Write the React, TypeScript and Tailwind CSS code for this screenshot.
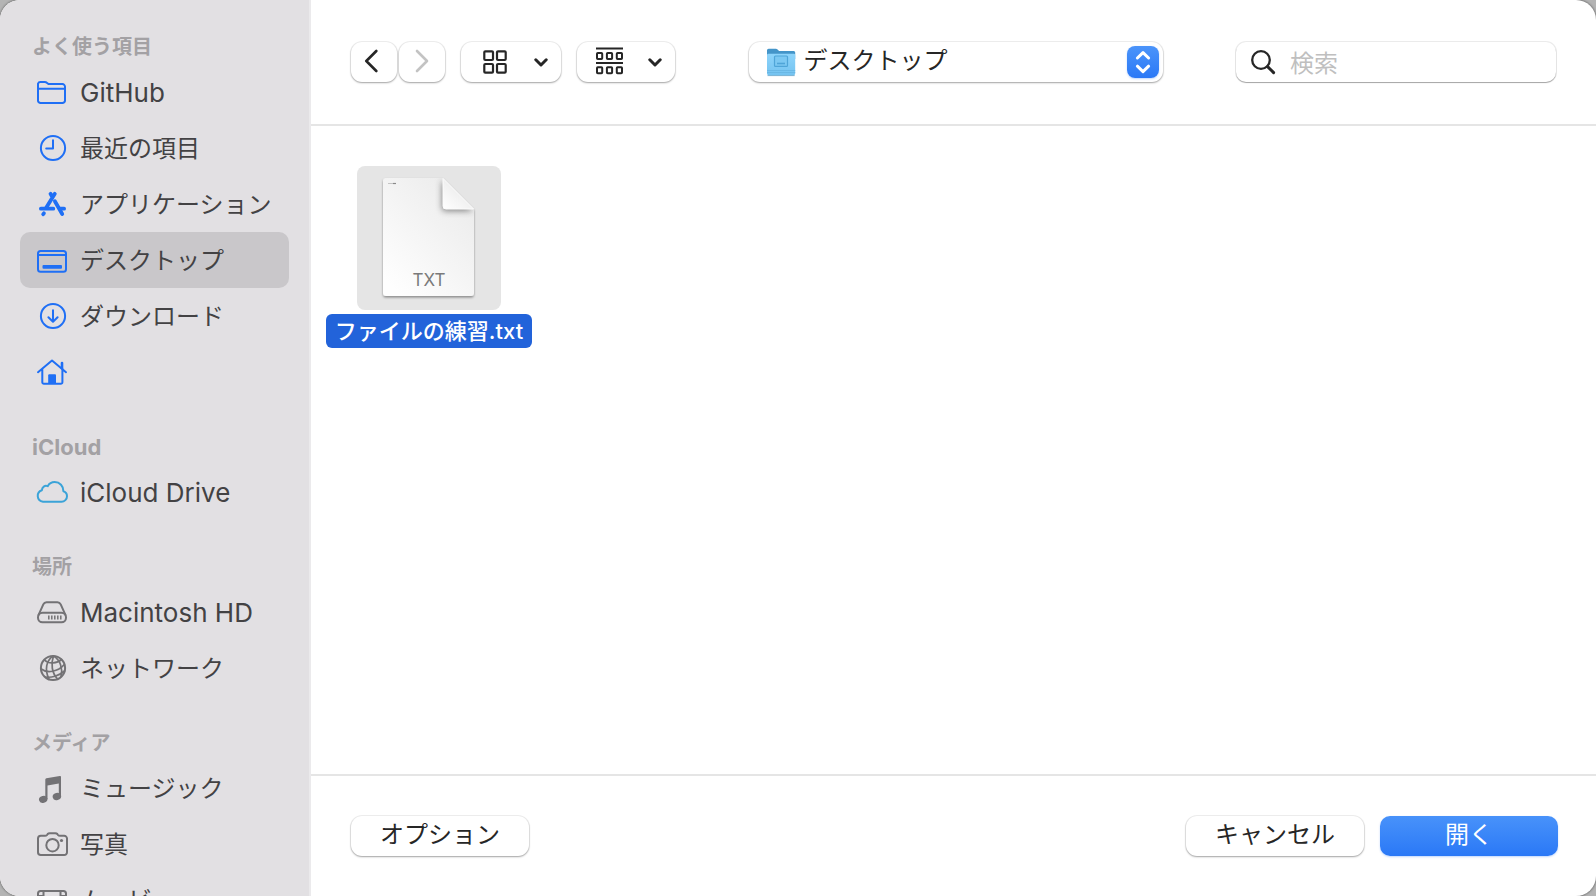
import type { ReactNode } from "react";

type Item = { label: string; icon: ReactNode; selected?: boolean; latin?: boolean };
type Section = { title: string; tone: string; items: Item[]; latin?: boolean };

function Glyph({ children }: { children: ReactNode }) {
  return (
    <svg
      viewBox="0 0 32 32"
      className="size-8 shrink-0"
      fill="none"
      stroke="currentColor"
      strokeWidth="2"
      strokeLinecap="round"
      strokeLinejoin="round"
      aria-hidden="true"
    >
      {children}
    </svg>
  );
}

const FolderGlyph = (
  <Glyph>
    <path d="M2 7.600A2.600 2.600 0 0 1 4.600 6H8.800C9.800 6 10.400 6.300 11.100 6.900L11.700 7.400C12.300 7.900 12.800 8.100 13.700 8.100H26.400A2.600 2.600 0 0 1 29 10.700V24.400A2.600 2.600 0 0 1 26.400 27H4.600A2.600 2.600 0 0 1 2 24.400ZM2 12.800H29" />
  </Glyph>
);
const ClockGlyph = (
  <Glyph>
    <circle cx="17" cy="16" r="12.100" />
    <path d="M17 8.200V16.500H10.200" />
  </Glyph>
);
const AppsGlyph = (
  <Glyph>
    <g strokeWidth="3.800">
      <path d="M14.500 5.800 15.800 8M18.800 5.800 10.200 19.800" />
      <path d="M18.900 13.200 26.200 26" />
      <path d="M4.900 20.700H17.300M24.500 20.700H28.100" />
      <path d="M7.900 25.300 7.200 26.200" />
    </g>
  </Glyph>
);
const DesktopGlyph = (
  <Glyph>
    <rect x="2" y="7" width="28" height="20.800" rx="2.600" />
    <path d="M2 11H30" />
    <rect x="6.500" y="21" width="19.500" height="3.800" rx="1" fill="currentColor" stroke="none" />
  </Glyph>
);
const DownloadGlyph = (
  <Glyph>
    <circle cx="17" cy="16" r="12.100" />
    <path d="M17 10.200V21.600M12.400 17.200 17 21.700 21.600 17.200" />
  </Glyph>
);
const HomeGlyph = (
  <Glyph>
    <path d="M2 16.200 16 4.500 30 16.200M6.300 13V26.200A1.600 1.600 0 0 0 7.900 27.800H24.800A1.600 1.600 0 0 0 26.400 26.200V13" />
    <path d="M26 12.500V7" strokeWidth="2.600" />
    <path d="M12.200 28V19.200A1 1 0 0 1 13.200 18.200H19A1 1 0 0 1 20 19.200V28Z" fill="currentColor" stroke="none" />
  </Glyph>
);
const CloudGlyph = (
  <Glyph>
    <path d="M7 25.700A5.900 5.900 0 0 1 5.900 14.200C5.900 11 8.900 9 11.700 10.200 13.200 7.500 15.800 6.100 18.700 6.100 23.800 6.100 27.500 10 27.400 15.200 29.600 15.900 31 17.900 31 20.200A5.500 5.500 0 0 1 25.500 25.700Z" />
  </Glyph>
);
const DriveGlyph = (
  <Glyph>
    <path d="M2.600 18.800 7.300 8.300C8 6.800 9 6.200 10.500 6.200H21.500C23 6.200 24 6.800 24.700 8.300L29.400 18.800" />
    <rect x="2" y="16.700" width="28" height="9.600" rx="4.500" />
    <path d="M12.800 19.600V23.400M15.800 19.600V23.400M18.800 19.600V23.400M21.800 19.600V23.400M24.800 19.600V23.400" strokeWidth="1.500" strokeLinecap="butt" />
  </Glyph>
);
const NetworkGlyph = (
  <Glyph>
    <circle cx="17" cy="16" r="12.100" />
    <g strokeWidth="1.700">
      <path d="M17.500 4C10 8 8.500 18 13 27.300M17.500 4C14.500 12 16 21 21.500 27M17.500 4C24.500 8 27 17 25 24.500" />
      <path d="M8.500 8C13 12.500 21 11.500 25.500 7.500M5.200 17C11 21.500 22 20 28.300 12.500M9.500 25C15 26 23 24 28.500 19" />
    </g>
  </Glyph>
);
const MusicGlyph = (
  <Glyph>
    <g fill="currentColor" stroke="none">
      <path d="M9.300 7.600C9.300 6.900 9.700 6.500 10.400 6.300L23.800 3.900C24.600 3.800 25 4.100 25 4.800V24.300H22.800V11.400L11.500 13.500V27H9.300Z" />
      <ellipse cx="7.200" cy="27.300" rx="4.300" ry="3.500" transform="rotate(-14 7.200 27.300)" />
      <ellipse cx="20.900" cy="24.500" rx="4.300" ry="3.500" transform="rotate(-14 20.900 24.500)" />
    </g>
  </Glyph>
);
const CameraGlyph = (
  <Glyph>
    <path d="M4.800 7.800H9C10 7.800 10.500 7.500 11.100 6.800L11.700 6C12.300 5.300 12.800 5.200 13.600 5.200H19.400C20.200 5.200 20.700 5.300 21.300 6L21.900 6.800C22.500 7.500 23 7.800 24 7.800H28.200A2.800 2.800 0 0 1 31 10.600V24.200A2.800 2.800 0 0 1 28.200 27H4.800A2.800 2.800 0 0 1 2 24.200V10.600A2.800 2.800 0 0 1 4.800 7.800Z" />
    <circle cx="16.500" cy="17.200" r="6.200" />
    <circle cx="25.500" cy="12.500" r="1.600" fill="currentColor" stroke="none" />
  </Glyph>
);
const FilmGlyph = (
  <Glyph>
    <rect x="2" y="7" width="28" height="21" rx="2.600" />
    <path d="M7.500 7V28M24.500 7V28M2 12H7.500M2 17.500H7.500M2 23H7.500M24.500 12H30M24.500 17.500H30M24.500 23H30M7.500 17.500H24.500" />
  </Glyph>
);

const sections: Section[] = [
  {
    title: "よく使う項目",
    tone: "text-[#1f6ff5]",
    items: [
      { label: "GitHub", icon: FolderGlyph, latin: true },
      { label: "最近の項目", icon: ClockGlyph },
      { label: "アプリケーション", icon: AppsGlyph },
      { label: "デスクトップ", icon: DesktopGlyph, selected: true },
      { label: "ダウンロード", icon: DownloadGlyph },
      { label: "", icon: HomeGlyph },
    ],
  },
  {
    title: "iCloud",
    latin: true,
    tone: "text-[#3ba3d8]",
    items: [{ label: "iCloud Drive", icon: CloudGlyph, latin: true }],
  },
  {
    title: "場所",
    tone: "text-[#737275]",
    items: [
      { label: "Macintosh HD", icon: DriveGlyph, latin: true },
      { label: "ネットワーク", icon: NetworkGlyph },
    ],
  },
  {
    title: "メディア",
    tone: "text-[#737275]",
    items: [
      { label: "ミュージック", icon: MusicGlyph },
      { label: "写真", icon: CameraGlyph },
      { label: "ムービー", icon: FilmGlyph },
    ],
  },
];

function Sidebar() {
  return (
    <nav className="flex w-[311px] shrink-0 flex-col gap-7 overflow-hidden border-r-2 border-[#ebeaec] bg-[#e2e0e3] px-5 pt-7">
      {sections.map((section) => (
        <section key={section.title} className="shrink-0">
          <h2
            className={`flex h-9 items-center px-3 pt-0.5 font-bold text-[#a3a1a4] ${section.latin ? "text-[22px]" : "text-xl"}`}
          >
            {section.title}
          </h2>
          <ul>
            {section.items.map((item, i) => (
              <li key={i}>
                <a
                  href="#"
                  aria-current={item.selected ? "page" : undefined}
                  className={`flex h-14 items-center gap-3 rounded-[10px] px-4 ${item.selected ? "bg-[#c9c7ca]" : ""}`}
                >
                  <span className={section.tone}>{item.icon}</span>
                  <span
                    className={`pt-0.5 leading-8 whitespace-nowrap text-[#434244] ${item.latin ? "text-[26px]" : "text-2xl"}`}
                  >
                    {item.label}
                  </span>
                </a>
              </li>
            ))}
          </ul>
        </section>
      ))}
    </nav>
  );
}

const raised =
  "rounded-[11px] bg-white shadow-[0_0_0_1px_rgba(0,0,0,0.06),0_1px_2px_rgba(0,0,0,0.32)]";

function DownChevron() {
  return (
    <svg viewBox="0 0 14 9" className="h-[9px] w-[14px]" fill="none" stroke="currentColor" strokeWidth="3" strokeLinecap="round" strokeLinejoin="round" aria-hidden="true">
      <path d="M1.800 1.800 7 7 12.200 1.800" />
    </svg>
  );
}

function Toolbar() {
  return (
    <header className="flex h-[126px] shrink-0 items-center justify-between border-b-2 border-[#e5e5e5] px-10 text-[#262626]">
      <div className="flex gap-4">
        <div className="flex gap-0.5">
          <button type="button" aria-label="戻る" className={`flex h-10 w-[46px] items-center justify-center pr-1.5 pb-0.5 ${raised}`}>
            <svg viewBox="0 0 14 24" className="h-6 w-3.5" fill="none" stroke="currentColor" strokeWidth="2.600" strokeLinecap="round" strokeLinejoin="round" aria-hidden="true">
              <path d="M12.300 2 2.300 12 12.300 22" />
            </svg>
          </button>
          <button type="button" aria-label="進む" disabled className={`flex h-10 w-[46px] items-center justify-center pb-0.5 text-[#c3c3c3] ${raised}`}>
            <svg viewBox="0 0 14 24" className="h-6 w-3.5" fill="none" stroke="currentColor" strokeWidth="2.600" strokeLinecap="round" strokeLinejoin="round" aria-hidden="true">
              <path d="M2 2 12 12 2 22" />
            </svg>
          </button>
        </div>
        <button type="button" aria-label="表示方法" className={`flex h-10 w-[100px] items-center justify-between pr-[13px] pl-[22px] ${raised}`}>
          <svg viewBox="0 0 24 25" className="h-[25px] w-6" fill="none" stroke="currentColor" strokeWidth="2.200" aria-hidden="true">
            <rect x="1.300" y="1.300" width="8.700" height="8.700" rx="1" />
            <rect x="14" y="1.300" width="8.700" height="8.700" rx="1" />
            <rect x="1.300" y="14" width="8.700" height="8.700" rx="1" />
            <rect x="14" y="14" width="8.700" height="8.700" rx="1" />
          </svg>
          <DownChevron />
        </button>
        <button type="button" aria-label="グループ分け" className={`flex h-10 w-[98px] items-center justify-between pr-[13px] pl-[19px] ${raised}`}>
          <svg viewBox="0 0 27 30" className="h-[30px] w-[27px]" fill="none" stroke="currentColor" strokeWidth="2" aria-hidden="true">
            <path d="M0 1.500H27M0 16H27" />
            <rect x="1" y="6" width="5.200" height="6" rx="0.800" />
            <rect x="10.900" y="6" width="5.200" height="6" rx="0.800" />
            <rect x="20.800" y="6" width="5.200" height="6" rx="0.800" />
            <rect x="1" y="20.300" width="5.200" height="6" rx="0.800" />
            <rect x="10.900" y="20.300" width="5.200" height="6" rx="0.800" />
            <rect x="20.800" y="20.300" width="5.200" height="6" rx="0.800" />
          </svg>
          <DownChevron />
        </button>
      </div>

      <div className={`flex h-10 w-[414px] items-center pr-1 pl-[17px] ${raised}`}>
        <svg viewBox="0 0 30 30" className="size-[30px] shrink-0" aria-hidden="true">
          <defs>
            <linearGradient id="folder-front" x1="0" y1="0" x2="0" y2="1">
              <stop offset="0" stopColor="#8ed4fb" />
              <stop offset="1" stopColor="#74c3f0" />
            </linearGradient>
          </defs>
          <path d="M1 3.300A1.600 1.600 0 0 1 2.600 1.700H9.500C10.400 1.700 10.900 1.900 11.600 2.600L12.300 3.300C12.900 3.900 13.400 4.100 14.200 4.100H27.700A1.500 1.500 0 0 1 29.200 5.600V12H1Z" fill="#4495c9" />
          <path d="M1 8.200A1.400 1.400 0 0 1 2.400 6.800H27.800A1.400 1.400 0 0 1 29.200 8.200V26.600A1.700 1.700 0 0 1 27.500 28.300H2.700A1.700 1.700 0 0 1 1 26.600Z" fill="url(#folder-front)" />
          <path d="M1 23.500H29.200M1 25.500H29.200" stroke="#67b5e2" strokeWidth="0.800" />
          <path d="M1.500 28.600H28.700" stroke="#5c9fc8" strokeWidth="0.800" />
          <rect x="8.500" y="9" width="13" height="10.400" rx="1" fill="#7cc8f2" stroke="#4fa5d8" strokeWidth="1.200" />
          <path d="M11 16.500H19" stroke="#4fa5d8" strokeWidth="1.600" />
        </svg>
        <select aria-label="場所" className="ml-2 h-10 min-w-0 flex-1 appearance-none bg-transparent pb-0.5 text-2xl outline-none">
          <option>デスクトップ</option>
        </select>
        <span className="pointer-events-none flex size-8 shrink-0 items-center justify-center rounded-lg bg-linear-to-b from-[#4b94fa] to-[#2a78f6] text-white shadow-[0_1px_2px_rgba(42,120,246,0.3)]">
          <svg viewBox="0 0 16 24" className="h-6 w-4" fill="none" stroke="currentColor" strokeWidth="3" strokeLinecap="round" strokeLinejoin="round" aria-hidden="true">
            <path d="M2.400 8 8 2.600 13.600 8M2.400 16.200 8 21.600 13.600 16.200" />
          </svg>
        </span>
      </div>

      <label className="flex h-10 w-80 items-center gap-[14px] rounded-[10px] bg-white pl-[14px] shadow-[0_0_0_1px_rgba(0,0,0,0.08),0_1px_1px_rgba(0,0,0,0.3)]">
        <svg viewBox="0 0 26 26" className="size-[26px] shrink-0" fill="none" stroke="currentColor" strokeLinecap="round" aria-hidden="true">
          <circle cx="11" cy="11" r="8.800" strokeWidth="2.300" />
          <path d="M17.600 17.600 23.600 23.600" strokeWidth="3" />
        </svg>
        <input type="search" aria-label="検索" placeholder="検索" className="h-10 min-w-0 flex-1 bg-transparent pt-0.5 text-2xl outline-none placeholder:text-[#bfbfbf]" />
      </label>
    </header>
  );
}

function FileTile() {
  return (
    <button type="button" className="flex w-52 flex-col items-center gap-1">
      <span className="flex size-36 items-center justify-center rounded-lg bg-[#e5e5e5]">
        <svg viewBox="0 0 144 144" className="size-36" aria-hidden="true">
          <defs>
            <linearGradient id="paper" x1="1" y1="0" x2="0.200" y2="1">
              <stop offset="0" stopColor="#e9e9e9" />
              <stop offset="1" stopColor="#fefefe" />
            </linearGradient>
            <linearGradient id="fold" x1="0" y1="1" x2="0.600" y2="0.300">
              <stop offset="0" stopColor="#ffffff" />
              <stop offset="1" stopColor="#ececec" />
            </linearGradient>
            <filter id="paper-shadow" x="-20%" y="-20%" width="140%" height="140%">
              <feDropShadow dx="0" dy="1.500" stdDeviation="1.200" floodOpacity="0.400" />
            </filter>
            <filter id="fold-shadow" x="-50%" y="-50%" width="200%" height="200%">
              <feDropShadow dx="-1" dy="2" stdDeviation="3" floodOpacity="0.450" />
            </filter>
            <clipPath id="paper-clip">
              <path d="M29 12H86L117 43V127A3 3 0 0 1 114 130H29A3 3 0 0 1 26 127V15A3 3 0 0 1 29 12Z" />
            </clipPath>
          </defs>
          <path d="M29 12H86L117 43V127A3 3 0 0 1 114 130H29A3 3 0 0 1 26 127V15A3 3 0 0 1 29 12Z" fill="url(#paper)" filter="url(#paper-shadow)" />
          <g clipPath="url(#paper-clip)">
            <path d="M86 12V40A3 3 0 0 0 89 43H117Z" fill="#eeeeee" filter="url(#fold-shadow)" />
          </g>
          <path d="M86 12.500V40A3 3 0 0 0 89 43H116.500Z" fill="url(#fold)" stroke="#fbfbfb" strokeWidth="1" />
          <path d="M31 17.500H36" stroke="#c4c4c4" strokeWidth="1" />
          <path d="M36 17.500H39" stroke="#8a8a8a" strokeWidth="1.200" />
          <text x="72" y="120" textAnchor="middle" fontSize="17" fill="#7a7a7a">
            TXT
          </text>
        </svg>
      </span>
      <span className="flex h-[34px] items-center rounded-md bg-[#2263da] px-[9px] text-[22px] font-medium whitespace-nowrap text-white">
        ファイルの練習.txt
      </span>
    </button>
  );
}

function Footer() {
  return (
    <footer className="flex h-[122px] shrink-0 items-center justify-between border-t-2 border-[#e5e5e5] pr-[38px] pl-10 text-2xl text-[#262626]">
      <button type="button" className={`h-10 w-[178px] pb-0.5 ${raised}`}>
        オプション
      </button>
      <div className="flex gap-4">
        <button type="button" className={`h-10 w-[178px] pb-0.5 ${raised}`}>
          キャンセル
        </button>
        <button type="button" className="h-10 w-[178px] rounded-[10px] bg-linear-to-b from-[#4892fa] to-[#2a78f6] pb-0.5 text-white shadow-[0_1px_2px_rgba(42,120,246,0.3)]">
          開く
        </button>
      </div>
    </footer>
  );
}

export default function App() {
  return (
    <div className="h-screen bg-[#b4b4b4] font-['Inter','Noto_Sans_CJK_JP',sans-serif]">
      <div className="flex h-full overflow-hidden rounded-[20px] bg-white shadow-[0_0_2px_1px_rgba(0,0,0,0.3)]">
        <Sidebar />
        <main className="flex min-w-0 flex-1 flex-col">
          <Toolbar />
          <div className="flex-1 px-3.5 pt-10">
            <FileTile />
          </div>
          <Footer />
        </main>
      </div>
    </div>
  );
}
